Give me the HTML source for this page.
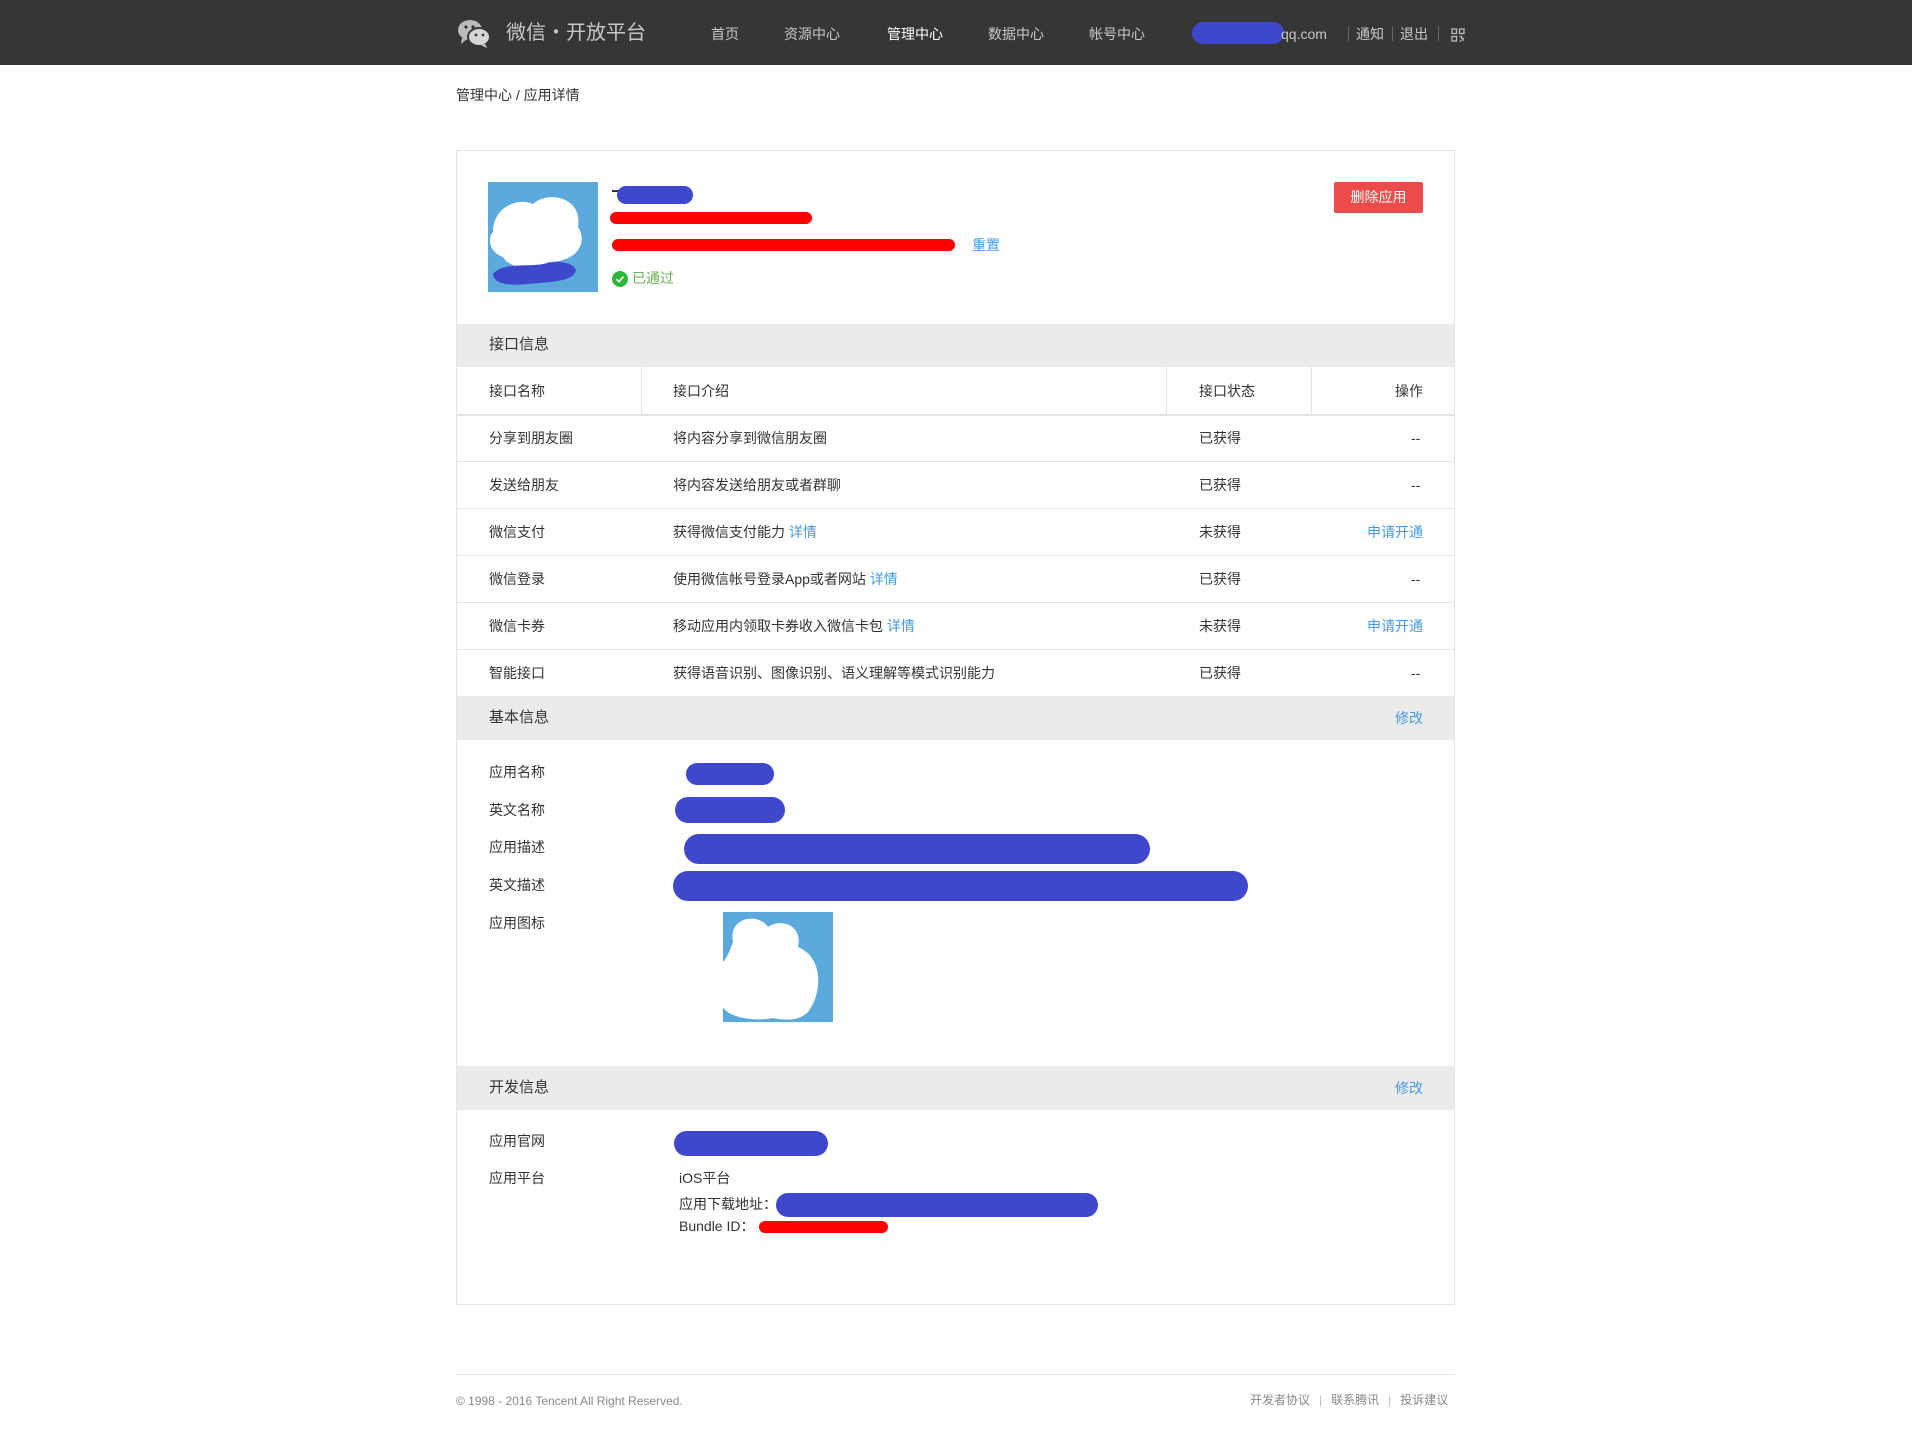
<!DOCTYPE html>
<html><head><meta charset="utf-8">
<style>
*{margin:0;padding:0;box-sizing:border-box}
body{width:1912px;height:1438px;background:#fff;font-family:"Liberation Sans","Noto Sans CJK SC",sans-serif;color:#333;position:relative;overflow:hidden}
.a{position:absolute;white-space:nowrap}
.t{font-size:14px;line-height:20px}
.blue{color:#459ae9}
.nav{position:absolute;left:0;top:0;width:1912px;height:65px;background:#363636}
.nv{position:absolute;top:25px;font-size:14px;line-height:18px;color:#c8c8c8}
.hd{position:absolute;left:457px;width:997px;background:#ebebeb}
.hl{position:absolute;left:457px;width:997px;height:1px;background:#e4e4e4}
.blob{position:absolute;background:#3f47cc;border-radius:14px}
.red{position:absolute;background:#f00;border-radius:6px}
</style></head><body>
<div class="nav"></div>
<svg class="a" style="left:456px;top:17px" width="36" height="32" viewBox="0 0 36 32">
<ellipse cx="14" cy="13" rx="12" ry="10" fill="#bbb"/><path d="M6 21 L5 27 L11 22Z" fill="#bbb"/>
<ellipse cx="23" cy="20" rx="11" ry="9" fill="#d6d6d6" stroke="#363636" stroke-width="2"/><path d="M29 27 L31 31 L25 28Z" fill="#d6d6d6"/>
<circle cx="10" cy="10" r="1.6" fill="#363636"/><circle cx="17" cy="10" r="1.6" fill="#363636"/>
<circle cx="20" cy="18" r="1.4" fill="#363636"/><circle cx="27" cy="18" r="1.4" fill="#363636"/></svg>
<div class="a" style="left:506px;top:20px;font-size:20px;line-height:26px;color:#c8c8c8">微信・开放平台</div>
<div class="nv" style="left:711px">首页</div>
<div class="nv" style="left:784px">资源中心</div>
<div class="nv" style="left:887px;color:#fff">管理中心</div>
<div class="nv" style="left:988px">数据中心</div>
<div class="nv" style="left:1089px">帐号中心</div>
<div class="blob" style="left:1192px;top:22px;width:92px;height:22px;border-radius:11px"></div>
<div class="nv" style="left:1281px">qq.com</div>
<div class="a" style="left:1348px;top:26px;width:1px;height:15px;background:#666"></div>
<div class="nv" style="left:1356px">通知</div>
<div class="a" style="left:1392px;top:26px;width:1px;height:15px;background:#666"></div>
<div class="nv" style="left:1400px">退出</div>
<div class="a" style="left:1438px;top:26px;width:1px;height:15px;background:#666"></div>
<svg class="a" style="left:1451px;top:28px" width="14" height="14" viewBox="0 0 14 14" fill="none" stroke="#bbb" stroke-width="1.3"><rect x="1" y="1" width="4.5" height="4.5"/><rect x="8.5" y="1" width="4.5" height="4.5"/><rect x="1" y="8.5" width="4.5" height="4.5"/><path d="M8.5 8.5h2v2h2.5M8.5 13h2M12 11v2"/></svg>

<div class="a t" style="left:456px;top:85px;color:#333">管理中心 / 应用详情</div>

<div class="a" style="left:456px;top:150px;width:999px;height:1155px;border:1px solid #e4e4e4"></div>
<svg class="a" style="left:488px;top:182px" width="110" height="110" viewBox="0 0 110 110"><rect width="110" height="110" fill="#5ca9dd"/><path d="M5 50 C5 25 30 15 45 22 C60 8 95 15 90 45 C100 60 90 80 60 80 C45 92 20 85 15 75 C0 70 0 55 5 50Z" fill="#fff"/><path d="M5 92 C15 80 40 85 55 82 C70 78 85 80 88 88 C86 100 60 100 40 102 C20 104 6 102 5 92Z" fill="#3f47cc"/></svg>
<div class="a" style="left:612px;top:190px;width:8px;height:2px;background:#333"></div>
<div class="blob" style="left:617px;top:186px;width:76px;height:18px;border-radius:9px"></div>
<div class="red" style="left:610px;top:212px;width:202px;height:12px"></div>
<div class="red" style="left:612px;top:239px;width:343px;height:12px"></div>
<div class="a t blue" style="left:972px;top:235px">重置</div>
<svg class="a" style="left:612px;top:271px" width="16" height="16"><circle cx="8" cy="8" r="8" fill="#2fb53a"/><path d="M4.5 8.3 7 10.7 11.5 5.5" stroke="#fff" stroke-width="1.6" fill="none"/></svg>
<div class="a t" style="left:632px;top:268px;color:#6ab253">已通过</div>
<div class="a" style="left:1334px;top:182px;width:89px;height:31px;background:#ec4b4b;border-radius:2px;color:#fff;font-size:14px;line-height:31px;text-align:center">删除应用</div>

<div class="hd" style="top:324px;height:43px"></div>
<div class="a" style="left:489px;top:335px;font-size:15px;line-height:20px">接口信息</div>
<div class="a" style="left:641px;top:367px;width:1px;height:48px;background:#e4e4e4"></div>
<div class="a" style="left:1166px;top:367px;width:1px;height:48px;background:#e4e4e4"></div>
<div class="a" style="left:1311px;top:367px;width:1px;height:48px;background:#e4e4e4"></div>
<div class="a t" style="left:489px;top:381px">接口名称</div>
<div class="a t" style="left:673px;top:381px">接口介绍</div>
<div class="a t" style="left:1199px;top:381px">接口状态</div>
<div class="a t" style="left:1395px;top:381px">操作</div>
<div class="hl" style="top:414px;height:2px"></div>

<div class="a t" style="left:489px;top:428px">分享到朋友圈</div><div class="a t" style="left:673px;top:428px">将内容分享到微信朋友圈</div><div class="a t" style="left:1199px;top:428px">已获得</div><div class="a t" style="left:1411px;top:428px">--</div>
<div class="hl" style="top:461px"></div>
<div class="a t" style="left:489px;top:475px">发送给朋友</div><div class="a t" style="left:673px;top:475px">将内容发送给朋友或者群聊</div><div class="a t" style="left:1199px;top:475px">已获得</div><div class="a t" style="left:1411px;top:475px">--</div>
<div class="hl" style="top:508px"></div>
<div class="a t" style="left:489px;top:522px">微信支付</div><div class="a t" style="left:673px;top:522px">获得微信支付能力 <span class="blue">详情</span></div><div class="a t" style="left:1199px;top:522px">未获得</div><div class="a t blue" style="left:1367px;top:522px">申请开通</div>
<div class="hl" style="top:555px"></div>
<div class="a t" style="left:489px;top:569px">微信登录</div><div class="a t" style="left:673px;top:569px">使用微信帐号登录App或者网站 <span class="blue">详情</span></div><div class="a t" style="left:1199px;top:569px">已获得</div><div class="a t" style="left:1411px;top:569px">--</div>
<div class="hl" style="top:602px"></div>
<div class="a t" style="left:489px;top:616px">微信卡券</div><div class="a t" style="left:673px;top:616px">移动应用内领取卡券收入微信卡包 <span class="blue">详情</span></div><div class="a t" style="left:1199px;top:616px">未获得</div><div class="a t blue" style="left:1367px;top:616px">申请开通</div>
<div class="hl" style="top:649px"></div>
<div class="a t" style="left:489px;top:663px">智能接口</div><div class="a t" style="left:673px;top:663px">获得语音识别、图像识别、语义理解等模式识别能力</div><div class="a t" style="left:1199px;top:663px">已获得</div><div class="a t" style="left:1411px;top:663px">--</div>

<div class="hd" style="top:696px;height:44px"></div>
<div class="a" style="left:489px;top:708px;font-size:15px;line-height:20px">基本信息</div>
<div class="a t blue" style="left:1395px;top:708px">修改</div>
<div class="a t" style="left:489px;top:762px">应用名称</div>
<div class="a t" style="left:489px;top:800px">英文名称</div>
<div class="a t" style="left:489px;top:837px">应用描述</div>
<div class="a t" style="left:489px;top:875px">英文描述</div>
<div class="a t" style="left:489px;top:913px">应用图标</div>
<div class="blob" style="left:686px;top:763px;width:88px;height:22px;border-radius:11px"></div>
<div class="blob" style="left:675px;top:797px;width:110px;height:26px;border-radius:13px"></div>
<div class="blob" style="left:684px;top:834px;width:466px;height:30px;border-radius:15px"></div>
<div class="blob" style="left:673px;top:871px;width:575px;height:30px;border-radius:15px"></div>
<svg class="a" style="left:723px;top:912px" width="110" height="110" viewBox="0 0 110 110"><rect width="110" height="110" fill="#5ca9dd"/><path d="M10 30 C5 5 35 0 45 15 C60 5 80 15 75 35 C100 45 100 80 85 100 C75 110 60 108 50 106 C30 110 5 105 0 95 L0 50 C5 45 8 35 10 30Z" fill="#fff"/></svg>

<div class="hd" style="top:1066px;height:44px"></div>
<div class="a" style="left:489px;top:1078px;font-size:15px;line-height:20px">开发信息</div>
<div class="a t blue" style="left:1395px;top:1078px">修改</div>
<div class="a t" style="left:489px;top:1131px">应用官网</div>
<div class="blob" style="left:674px;top:1131px;width:154px;height:25px;border-radius:13px"></div>
<div class="a t" style="left:489px;top:1168px">应用平台</div>
<div class="a t" style="left:679px;top:1168px">iOS平台</div>
<div class="a t" style="left:679px;top:1194px">应用下载地址：</div>
<div class="blob" style="left:776px;top:1193px;width:322px;height:24px;border-radius:12px"></div>
<div class="a t" style="left:679px;top:1216px">Bundle ID：</div>
<div class="red" style="left:759px;top:1221px;width:129px;height:12px"></div>

<div class="a" style="left:456px;top:1374px;width:999px;height:1px;background:#e4e4e4"></div>
<div class="a" style="left:456px;top:1392px;font-size:12px;line-height:18px;color:#888">© 1998 - 2016 Tencent All Right Reserved.</div>
<div class="a" style="left:1250px;top:1391px;font-size:12px;line-height:18px;color:#888">开发者协议<span style="margin:0 9px;color:#bbb">|</span>联系腾讯<span style="margin:0 9px;color:#bbb">|</span>投诉建议</div>
</body></html>
